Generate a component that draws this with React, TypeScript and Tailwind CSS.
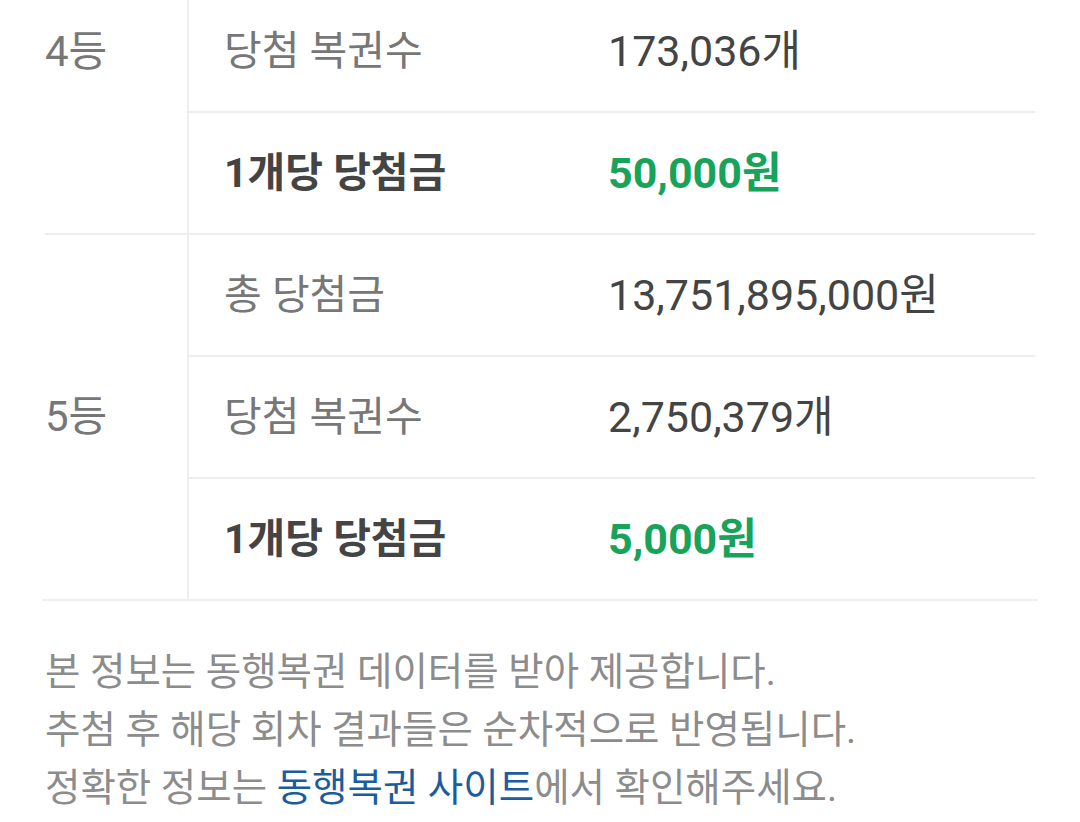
function Row({ label, value, strong, last }: { label: string; value: string; strong?: boolean; last?: boolean }) {
  return (
    <div className={`flex items-center ${last ? 'h-[120px]' : 'h-[122px] border-b-2 border-[#eeeeee]'}`}>
      <div className={`w-[384px] pl-[35px] text-[41px] ${strong ? 'font-bold text-[#444444]' : 'text-[#777777]'}`}>{label}</div>
      <div className={`flex-1 pl-[35px] text-[43px] ${strong ? 'font-bold text-[#17a35a]' : 'text-[#444444]'}`}>{value}</div>
    </div>
  );
}

export default function App() {
  return (
    <div className="h-[822px] w-[1080px] overflow-hidden bg-white font-['Roboto','Noto_Sans_CJK_KR',sans-serif]">
      {/* prize table, scrolled so the top of the 4등 group is cut off */}
      <div className="-mt-[9px] ml-[45px] w-[990px] leading-none">
        {/* 4등 */}
        <div className="flex border-b-2 border-[#eeeeee]">
          <div className="w-[142px]">
            <div className="flex h-[122px] items-center text-[42px] text-[#777777]">4등</div>
          </div>
          <div className="flex flex-1 flex-col border-l-2 border-[#eeeeee]">
            <Row label="당첨 복권수" value="173,036개" />
            <Row label="1개당 당첨금" value="50,000원" strong last />
          </div>
        </div>

        {/* 5등 */}
        <div className="flex">
          <div className="flex w-[142px] items-center text-[42px] text-[#777777]">5등</div>
          <div className="flex flex-1 flex-col border-l-2 border-[#eeeeee]">
            <Row label="총 당첨금" value="13,751,895,000원" />
            <Row label="당첨 복권수" value="2,750,379개" />
            <Row label="1개당 당첨금" value="5,000원" strong last />
          </div>
        </div>
        <div className="-mx-[3px] h-[2px] bg-[#eeeeee]" />
      </div>

      {/* notice */}
      <div className="ml-[45px] mt-[42px] text-[38.5px] leading-[58px] text-[#8c8c8c]">
        <p>본 정보는 동행복권 데이터를 받아 제공합니다.</p>
        <p>추첨 후 해당 회차 결과들은 순차적으로 반영됩니다.</p>
        <p>
          정확한 정보는 <a className="text-[#1b5c9f]">동행복권 사이트</a>에서 확인해주세요.
        </p>
      </div>
    </div>
  );
}
